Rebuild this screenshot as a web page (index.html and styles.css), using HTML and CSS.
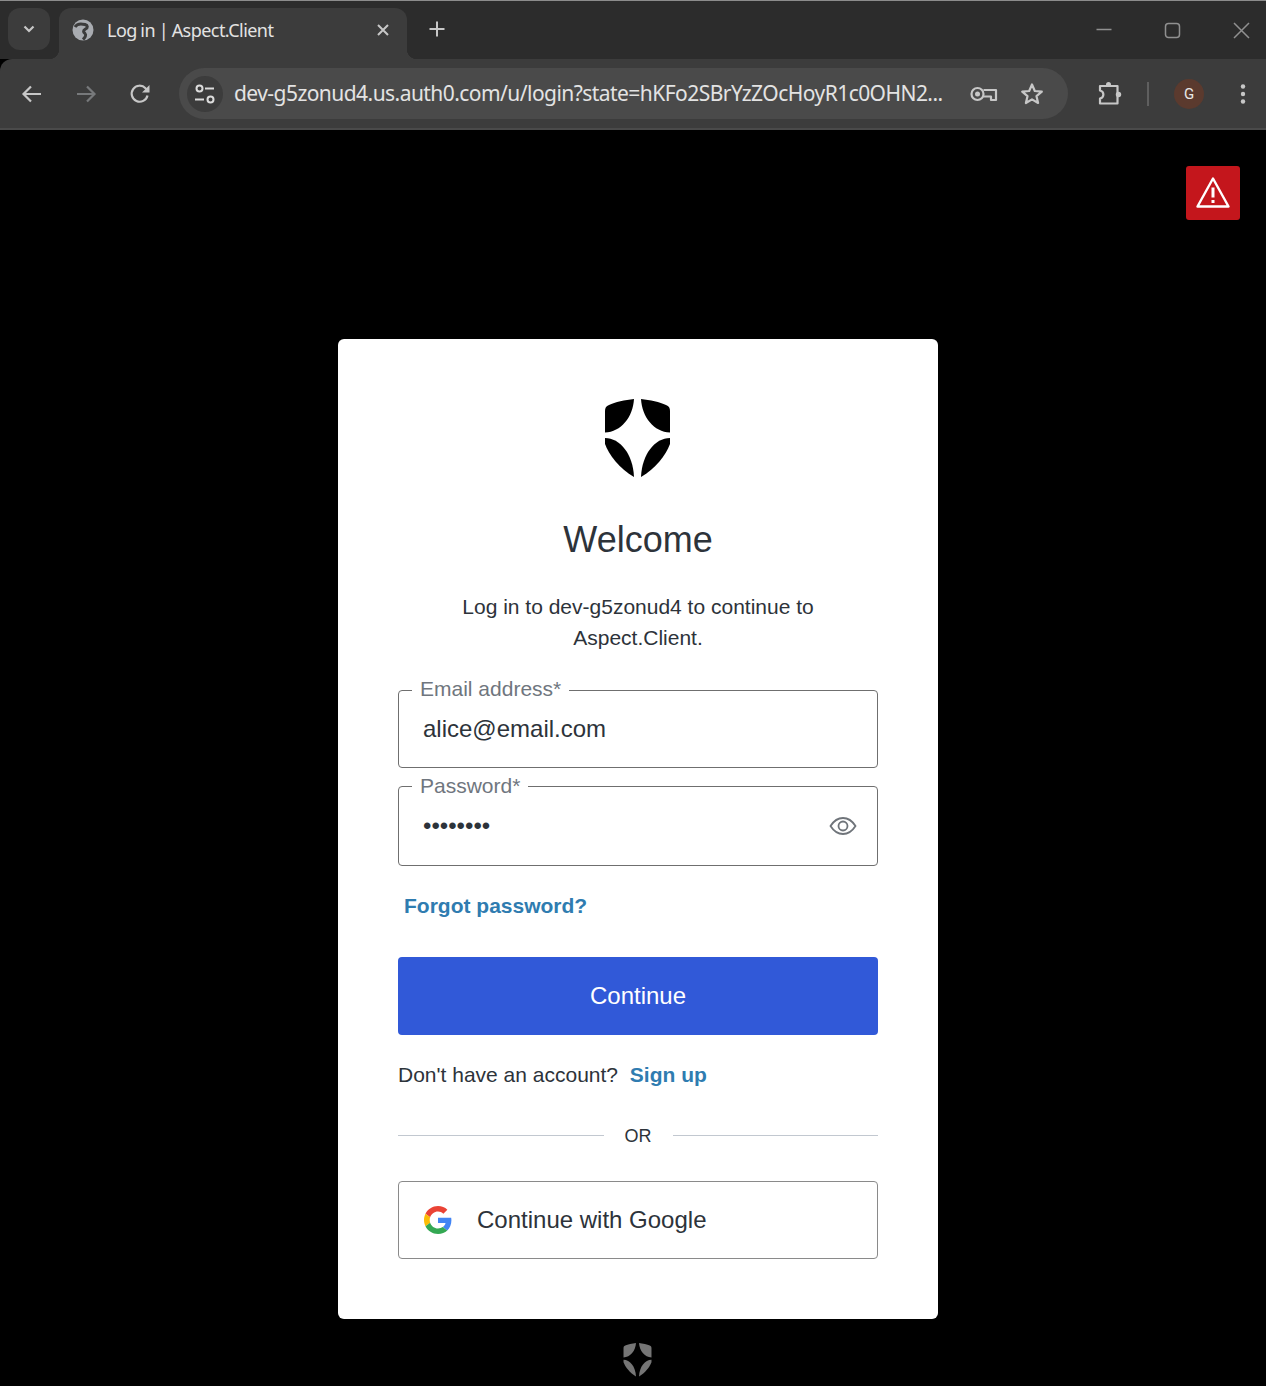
FILE: index.html

```html
<!DOCTYPE html>
<html lang="en">
<head>
<meta charset="UTF-8">
<meta name="viewport" content="width=device-width, initial-scale=1.0">
<title>Log in | Aspect.Client</title>
<link rel="stylesheet" href="styles.css">
</head>
<body>

<svg class="defs" width="0" height="0">
    <symbol id="shield" viewBox="0 0 65 79">
        <path d="M29 0C20 1 10 3 4 6C1 7 0 9 0 12V33.500C16 33 28 18 29 0Z"/>
        <path d="M36 0C45 1 55 3 61 6C64 7 65 9 65 12V33.500C49 33 37 18 36 0Z"/>
        <path d="M0 39C15 39 28 55 29 78C15 70 4 56 0 45Z"/>
        <path d="M65 39C50 39 37 55 36 78C50 70 61 56 65 45Z"/>
    </symbol>
</svg>

<header class="chrome">
    <div class="tabstrip">
        <div class="tab-search">
            <svg width="16" height="16" viewBox="0 0 16 16"><path class="stroke" d="M3.500 5.500L8 10L12.500 5.500" stroke-width="2.200"/></svg>
        </div>
        <div class="tab">
            <svg class="favicon" width="22" height="22" viewBox="0 0 22 22">
                <circle cx="11" cy="11" r="10.500" fill="#a9acb1"/>
                <path d="M3 8C5 4.500 9 4.500 13 5.500C16 6.500 16 8.500 13.500 10C11 11.500 11 13 13 14.500C14.500 16 13 18.500 11 20.500" fill="none" stroke="#3c3c3c" stroke-width="3"/>
            </svg>
            <span class="tab-title">Log in | Aspect.Client</span>
            <svg class="tab-close" width="14" height="14" viewBox="0 0 14 14"><path class="stroke" d="M2 2L12 12M12 2L2 12" stroke-width="2"/></svg>
        </div>
        <svg class="new-tab" width="18" height="18" viewBox="0 0 18 18"><path class="stroke" d="M9 1.500V16.500M1.500 9H16.500" stroke-width="2"/></svg>
        <div class="window-controls">
            <svg width="24" height="24" viewBox="0 0 24 24"><path d="M4.500 11.500H19.500" stroke="#909090" stroke-width="1.500"/></svg>
            <svg width="24" height="24" viewBox="0 0 24 24"><rect x="4.500" y="5.500" width="14" height="14" rx="3" fill="none" stroke="#909090" stroke-width="1.500"/></svg>
            <svg width="24" height="24" viewBox="0 0 24 24"><path d="M5 5L20 20M20 5L5 20" stroke="#909090" stroke-width="1.500"/></svg>
        </div>
    </div>

    <div class="toolbar">
        <svg class="tool" width="24" height="24" viewBox="0 0 24 24"><path class="stroke" d="M21 12H4M11 4.500L3.500 12L11 19.500" stroke-width="2.200"/></svg>
        <svg class="tool" width="24" height="24" viewBox="0 0 24 24"><path class="stroke dim" d="M3 12H20M13 4.500L20.500 12L13 19.500" stroke-width="2.200"/></svg>
        <svg class="tool" width="24" height="24" viewBox="0 0 24 24"><path class="stroke" d="M19.500 13.500A8 8 0 1 1 17.500 6.200L20 8.500" stroke-width="2.200"/><path d="M21.500 3V10.500H14Z" fill="#c7c7c7"/></svg>

        <div class="omnibox">
            <div class="site-info">
                <svg width="24" height="24" viewBox="0 0 24 24">
                    <circle cx="6.500" cy="6.500" r="3" fill="none" stroke="#dcdcdc" stroke-width="2"/>
                    <path d="M12 6.500H21M2 17.500H11" stroke="#dcdcdc" stroke-width="2"/>
                    <circle cx="17.500" cy="17.500" r="3" fill="none" stroke="#dcdcdc" stroke-width="2"/>
                </svg>
            </div>
            <span class="url">dev-g5zonud4.us.auth0.com/u/login?state=hKFo2SBrYzZOcHoyR1c0OHN2...</span>
            <svg class="key" width="28" height="20" viewBox="0 0 28 20">
                <circle cx="7.500" cy="10" r="6" fill="none" stroke="#c7c7c7" stroke-width="2.200"/>
                <circle cx="7.500" cy="10" r="2.500" fill="#c7c7c7"/>
                <path d="M13.500 6H26V16H21V12.500H13.500" fill="none" stroke="#c7c7c7" stroke-width="2.200" stroke-linejoin="round"/>
            </svg>
            <svg class="star" width="26" height="26" viewBox="0 0 26 26"><path class="stroke" d="M13 3.500L15.800 10L22.800 10.600L17.500 15.200L19.100 22L13 18.400L6.900 22L8.500 15.200L3.200 10.600L10.200 10Z" stroke-width="2.200" stroke-linejoin="round"/></svg>
        </div>

        <svg class="extensions" width="26" height="26" viewBox="0 0 26 26">
            <path class="stroke" d="M3 5H20.500V22.500H3V17.500C7.500 16.500 7.500 10.500 3 9.500Z" stroke-width="2.200" stroke-linejoin="round"/>
            <circle cx="11.500" cy="3.500" r="2.500" fill="#c7c7c7"/>
            <circle cx="21.500" cy="13.500" r="2.700" fill="#c7c7c7"/>
        </svg>
        <span class="divider"></span>
        <div class="avatar">G</div>
        <svg class="menu" width="24" height="24" viewBox="0 0 24 24">
            <circle cx="12" cy="4.500" r="2.200" fill="#c7c7c7"/>
            <circle cx="12" cy="12" r="2.200" fill="#c7c7c7"/>
            <circle cx="12" cy="19.500" r="2.200" fill="#c7c7c7"/>
        </svg>
    </div>
</header>

<main class="page">
    <div class="alert">
        <svg width="36" height="34" viewBox="0 0 36 34"><path d="M18 2.500L33.500 30.500H2.500Z" fill="none" stroke="#fff" stroke-width="2.400" stroke-linejoin="round"/><path d="M18 11.500V21.500M18 24V27" stroke="#fff" stroke-width="3"/></svg>
    </div>

    <section class="card">
        <svg class="logo" width="65" height="79"><use href="#shield"/></svg>
        <h1>Welcome</h1>
        <p class="intro">Log in to dev-g5zonud4 to continue to Aspect.Client.</p>

        <div class="field email">
            <label>Email address*</label>
            <div class="value">alice@email.com</div>
        </div>
        <div class="field password">
            <label>Password*</label>
            <div class="value dots">••••••••</div>
            <svg class="eye" width="28" height="20" viewBox="0 0 28 20">
                <path d="M1.500 10C5 4.500 9 2 14 2C19 2 23 4.500 26.500 10C23 15.500 19 18 14 18C9 18 5 15.500 1.500 10Z" fill="none" stroke="#6f747a" stroke-width="1.800"/>
                <circle cx="14" cy="10" r="4.500" fill="none" stroke="#6f747a" stroke-width="1.800"/>
            </svg>
        </div>

        <a class="link forgot">Forgot password?</a>
        <button class="continue">Continue</button>
        <p class="signup">Don't have an account? <a class="link">Sign up</a></p>

        <div class="or"><span>OR</span></div>

        <button class="google">
            <svg width="28" height="28" viewBox="0 0 48 48">
                <path fill="#EA4335" d="M24 9.500c3.540 0 6.710 1.220 9.210 3.600l6.850-6.850C35.900 2.380 30.470 0 24 0 14.620 0 6.510 5.380 2.560 13.220l7.980 6.190C12.430 13.720 17.740 9.500 24 9.500z"/>
                <path fill="#4285F4" d="M46.980 24.550c0-1.570-.15-3.090-.38-4.550H24v9.020h12.940c-.58 2.960-2.260 5.480-4.780 7.180l7.730 6c4.510-4.180 7.090-10.360 7.090-17.650z"/>
                <path fill="#FBBC05" d="M10.530 28.590c-.48-1.450-.76-2.990-.76-4.590s.27-3.140.76-4.590l-7.980-6.190C.92 16.460 0 20.120 0 24c0 3.880.92 7.540 2.560 10.780l7.970-6.190z"/>
                <path fill="#34A853" d="M24 48c6.480 0 11.930-2.130 15.890-5.810l-7.730-6c-2.150 1.450-4.920 2.300-8.160 2.300-6.260 0-11.570-4.220-13.470-9.910l-7.980 6.190C6.510 42.620 14.620 48 24 48z"/>
            </svg>
            <span>Continue with Google</span>
        </button>
    </section>

    <svg class="footer-logo" width="29" height="34"><use href="#shield"/></svg>
</main>

</body>
</html>
```

FILE: styles.css

```css
* {
    box-sizing: border-box;
}

body {
    margin: 0;
    height: 1386px;
    overflow: hidden;
    background: #000;
    font-family: "Liberation Sans", Arial, sans-serif;
    color: #2d333a;
}

.defs {
    display: block;
    height: 0;
}

.stroke {
    fill: none;
    stroke: #c7c7c7;
}

.stroke.dim {
    stroke: #77797b;
}

/* browser frame */
.chrome {
    font-family: "Noto Sans", sans-serif;
}

.tabstrip {
    display: flex;
    align-items: flex-start;
    height: 59px;
    padding: 7px 0 0 8px;
    background: #2c2c2c;
    border-top: 1px solid #8c8c8c;
}

.tab-search {
    display: flex;
    align-items: center;
    justify-content: center;
    width: 42px;
    height: 42px;
    margin-right: 9px;
    background: #3c3c3c;
    border-radius: 12px;
}

.tab {
    position: relative;
    display: flex;
    align-items: center;
    width: 348px;
    height: 51px;
    padding: 0 17px 8px 13px;
    background: #3c3c3c;
    border-radius: 12px 12px 0 0;
}

.tab::before,
.tab::after {
    content: "";
    position: absolute;
    bottom: 0;
    width: 10px;
    height: 10px;
}

.tab::before {
    left: -10px;
    background: radial-gradient(circle at 0 0, #2c2c2c 10px, #3c3c3c 10.500px);
}

.tab::after {
    right: -10px;
    background: radial-gradient(circle at 100% 0, #2c2c2c 10px, #3c3c3c 10.500px);
}

.tab-title {
    flex: 1;
    margin-left: 13px;
    font-size: 18px;
    letter-spacing: -0.55px;
    word-spacing: -0.5px;
    color: #e3e3e3;
    white-space: nowrap;
}

.new-tab {
    margin: 12px 0 0 21px;
}

.window-controls {
    display: flex;
    gap: 44.500px;
    margin: 10px 13px 0 auto;
}

.toolbar {
    display: flex;
    align-items: center;
    gap: 30px;
    height: 71px;
    padding-left: 20px;
    background: #3c3c3c;
    border-bottom: 2px solid #4a4a4a;
    border-top-left-radius: 12px;
}

.omnibox {
    display: flex;
    align-items: center;
    width: 889px;
    height: 51px;
    margin-left: -3px;
    padding: 0 21px 0 8px;
    background: #4a4a4a;
    border-radius: 26px;
}

.site-info {
    display: flex;
    align-items: center;
    justify-content: center;
    width: 36px;
    height: 36px;
    background: #3c3c3c;
    border-radius: 50%;
}

.url {
    width: 710px;
    margin-left: 11px;
    padding-bottom: 2px;
    font-size: 21px;
    letter-spacing: -0.55px;
    color: #e3e3e3;
    white-space: nowrap;
}

.key {
    margin-left: 26px;
}

.star {
    margin-left: 21px;
}

.extensions {
    margin-left: -1px;
}

.divider {
    width: 2px;
    height: 24px;
    margin-left: -6px;
    background: #5f5f5f;
}

.avatar {
    width: 30px;
    height: 30px;
    margin-left: -5px;
    background: #5b3a2e;
    border-radius: 50%;
    color: #e8e8e8;
    font-family: "Roboto", sans-serif;
    font-size: 15px;
    line-height: 30px;
    text-align: center;
}

.menu {
    margin-left: -3px;
}

/* page */
.page {
    position: relative;
    display: flex;
    flex-direction: column;
    align-items: center;
    height: 1256px;
    padding: 209px 0 0 10px;
}

.alert {
    position: absolute;
    top: 36px;
    right: 26px;
    display: flex;
    align-items: center;
    justify-content: center;
    width: 54px;
    height: 54px;
    background: #c4161c;
    border-radius: 3px;
}

.card {
    display: flex;
    flex-direction: column;
    width: 600px;
    height: 980px;
    padding: 60px;
    background: #fff;
    border-radius: 6px;
}

.logo {
    display: block;
    align-self: center;
    margin-right: 1px;
    fill: #000;
}

h1 {
    margin: 39px 0 0;
    font-size: 36px;
    font-weight: 400;
    line-height: 46px;
    text-align: center;
}

.intro {
    margin: 28px auto 0;
    width: 380px;
    font-size: 21px;
    line-height: 31px;
    text-align: center;
}

.field {
    position: relative;
    display: flex;
    align-items: center;
    border: 1px solid #6f6f6f;
    border-radius: 4px;
    padding-left: 24px;
}

.field label {
    position: absolute;
    top: -13px;
    left: 13px;
    padding: 0 8px;
    background: #fff;
    color: #6f767e;
    font-size: 21px;
    line-height: 24px;
}

.email {
    height: 78px;
    margin-top: 37px;
}

.email label {
    top: -14px;
}

.password {
    height: 80px;
    margin-top: 18px;
}

.value {
    font-size: 24px;
}

.eye {
    position: absolute;
    right: 20px;
    top: 29px;
}

.link {
    color: #2f7cb0;
    font-weight: 700;
}

.forgot {
    align-self: flex-start;
    margin: 28px 0 0 6px;
    font-size: 21px;
    line-height: 24px;
}

.continue {
    height: 78px;
    margin-top: 39px;
    padding: 0;
    background: #3159d8;
    border: 0;
    border-radius: 4px;
    color: #fff;
    font: 24px "Liberation Sans", Arial, sans-serif;
}

.signup {
    margin: 28px 0 0;
    font-size: 21px;
    line-height: 24px;
}

.signup .link {
    margin-left: 6px;
}

.or {
    display: flex;
    align-items: center;
    margin-top: 35px;
    font-size: 18px;
    line-height: 24px;
}

.or::before,
.or::after {
    content: "";
    flex: 1;
    height: 1px;
    background: #c2c8d0;
}

.or span {
    padding: 2px 21px 0;
}

.google {
    display: flex;
    align-items: center;
    gap: 25px;
    height: 78px;
    margin-top: 33px;
    padding: 0 0 0 25px;
    background: #fff;
    border: 1px solid #8a8a8a;
    border-radius: 4px;
    color: #2d333a;
    font: 24px "Liberation Sans", Arial, sans-serif;
}

.footer-logo {
    display: block;
    margin: 24px 1px 0 0;
    fill: #757575;
}
```
